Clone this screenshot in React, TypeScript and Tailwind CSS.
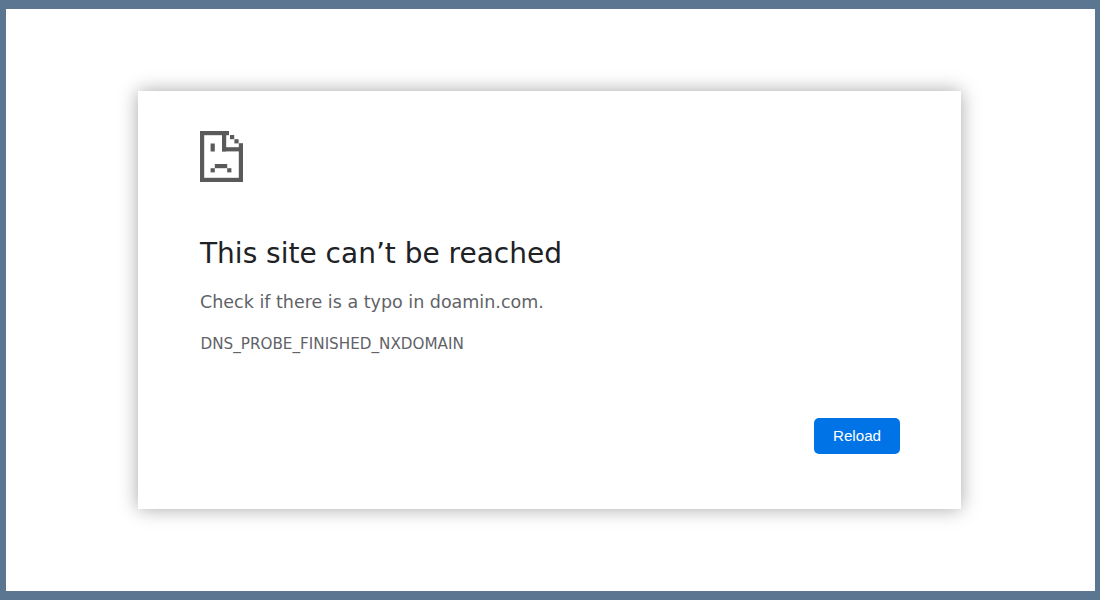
import React from "react";

const SadPage = () => (
  <svg width="43" height="51" viewBox="0 0 43 51" fill="#5a5a5a" className="block">
    <rect x="0" y="0" width="4.2" height="51" />
    <rect x="0" y="0" width="29" height="4.2" />
    <rect x="22" y="0" width="4.2" height="20.4" />
    <rect x="22" y="16.2" width="21" height="4.2" />
    <rect x="38.8" y="16.2" width="4.2" height="34.8" />
    <rect x="0" y="46.8" width="43" height="4.2" />
    <rect x="30" y="4" width="4.2" height="4.2" />
    <rect x="34.4" y="8.2" width="4.2" height="4.2" />
    <rect x="38.8" y="12.2" width="4.2" height="4.2" />
    <rect x="10.6" y="12.5" width="4.2" height="8" />
    <rect x="14.8" y="33" width="12.4" height="4.2" />
    <rect x="10.6" y="37.2" width="4.2" height="4.2" />
    <rect x="27.2" y="37.2" width="4.2" height="4.2" />
  </svg>
);

export default function App() {
  return (
    <div className="h-[600px] w-[1100px] bg-[#5a7690] pb-[9px] pl-[6px] pr-[5px] pt-[9px]">
      <div className="flex h-full w-full items-start justify-center bg-white pl-[132px] pr-[134px] pt-[82px]">
        <div className="flex h-[418px] w-[823px] flex-col bg-white pl-[62px] pr-[61px] pt-[40px] shadow-[0_0_18px_rgba(0,0,0,0.35)] font-['DejaVu_Sans',sans-serif]">
          <SadPage />
          <h1 className="mt-[52px] text-[28px] leading-[40px] text-[#202124]">This site can’t be reached</h1>
          <p className="mt-[16px] text-[17.5px] leading-[24px] text-[#5f6368]">Check if there is a typo in doamin.com.</p>
          <p className="mt-[20px] pl-[0.5px] text-[15.2px] leading-[20px] text-[#5f6368]">DNS_PROBE_FINISHED_NXDOMAIN</p>
          <div className="mt-[64px] flex justify-end">
            <button className="h-[36px] w-[86px] rounded-[5px] bg-[#0073e6] font-['Liberation_Sans',sans-serif] text-[15.2px] text-white">Reload</button>
          </div>
        </div>
      </div>
    </div>
  );
}
